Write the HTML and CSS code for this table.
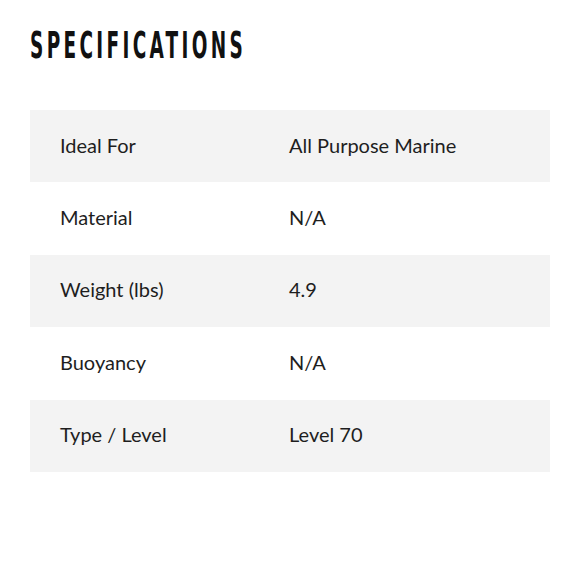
FILE: index.html
```html
<!DOCTYPE html>
<html>
<head>
<meta charset="utf-8">
<link rel="stylesheet" href="styles.css">
</head>
<body>
<section class="specs">
  <h2 class="specs-title"><span>SPECIFICATIONS</span></h2>
  <table class="specs-table">
    <tr><td class="label">Ideal For</td><td class="value">All Purpose Marine</td></tr>
    <tr><td class="label">Material</td><td class="value">N/A</td></tr>
    <tr><td class="label">Weight (lbs)</td><td class="value">4.9</td></tr>
    <tr><td class="label">Buoyancy</td><td class="value">N/A</td></tr>
    <tr><td class="label">Type / Level</td><td class="value">Level 70</td></tr>
  </table>
</section>
</body>
</html>
```
FILE: styles.css
```css
html, body {
  margin: 0;
  padding: 0;
  background: #fff;
}
.specs {
  padding: 0 30px;
  font-family: "Lato", "Open Sans", sans-serif;
  color: #1e1e1e;
}
.specs-title {
  margin: 0;
  height: 110px;
  display: flex;
  align-items: flex-start;
  padding-top: 26px;
  box-sizing: border-box;
  font-family: "Liberation Sans Narrow", "DejaVu Sans Condensed", sans-serif;
  font-weight: 700;
  font-size: 37px;
  line-height: 40px;
  letter-spacing: 6px;
  color: #111;
}
.specs-title span {
  display: inline-block;
  transform: scaleX(0.555);
  transform-origin: left center;
  white-space: nowrap;
}
.specs-table {
  width: 520px;
  border-collapse: collapse;
  font-size: 20px;
}
.specs-table tr {
  height: 72.4px;
}
.specs-table tr:nth-child(odd) {
  background: #f3f3f3;
}
.specs-table td {
  padding: 0 0 3px 0;
  vertical-align: middle;
}
.specs-table td.label {
  width: 229px;
  padding-left: 30px;
}
```
